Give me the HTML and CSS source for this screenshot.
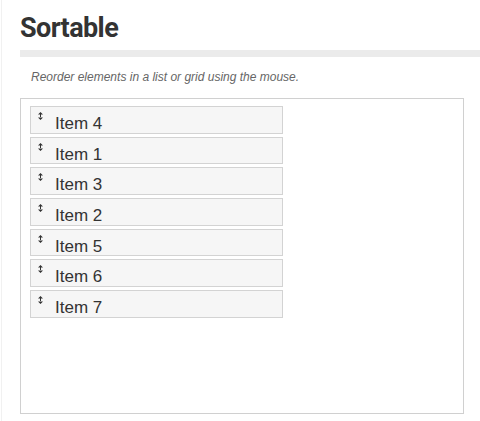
FILE: index.html
```html
<!DOCTYPE html>
<html lang="en">
<head>
  <meta charset="UTF-8">
  <title>Sortable</title>
  <link rel="stylesheet" href="styles.css">
</head>
<body>
  <div class="page">
    <div class="edge"></div>
    <div class="content">
      <h1>Sortable</h1>
      <div class="rule"></div>
      <p class="desc">Reorder elements in a list or grid using the mouse.</p>
      <div class="demo">
        <ul class="sortable">
          <li><svg class="handle" width="5" height="8" viewBox="0 0 5 8"><path d="M2.5 0 L5 2.5 H0 Z M2.5 8 L5 5.5 H0 Z M2 2 H3 V6 H2 Z" fill="#333"/></svg>Item 4</li>
          <li><svg class="handle" width="5" height="8" viewBox="0 0 5 8"><path d="M2.5 0 L5 2.5 H0 Z M2.5 8 L5 5.5 H0 Z M2 2 H3 V6 H2 Z" fill="#333"/></svg>Item 1</li>
          <li><svg class="handle" width="5" height="8" viewBox="0 0 5 8"><path d="M2.5 0 L5 2.5 H0 Z M2.5 8 L5 5.5 H0 Z M2 2 H3 V6 H2 Z" fill="#333"/></svg>Item 3</li>
          <li><svg class="handle" width="5" height="8" viewBox="0 0 5 8"><path d="M2.5 0 L5 2.5 H0 Z M2.5 8 L5 5.5 H0 Z M2 2 H3 V6 H2 Z" fill="#333"/></svg>Item 2</li>
          <li><svg class="handle" width="5" height="8" viewBox="0 0 5 8"><path d="M2.5 0 L5 2.5 H0 Z M2.5 8 L5 5.5 H0 Z M2 2 H3 V6 H2 Z" fill="#333"/></svg>Item 5</li>
          <li><svg class="handle" width="5" height="8" viewBox="0 0 5 8"><path d="M2.5 0 L5 2.5 H0 Z M2.5 8 L5 5.5 H0 Z M2 2 H3 V6 H2 Z" fill="#333"/></svg>Item 6</li>
          <li><svg class="handle" width="5" height="8" viewBox="0 0 5 8"><path d="M2.5 0 L5 2.5 H0 Z M2.5 8 L5 5.5 H0 Z M2 2 H3 V6 H2 Z" fill="#333"/></svg>Item 7</li>
        </ul>
      </div>
    </div>
  </div>
</body>
</html>
```

FILE: styles.css
```css
* { box-sizing: border-box; }
body {
  margin: 0;
  background: #fff;
  font-family: "Liberation Sans", Arial, sans-serif;
  color: #333;
}
.page {
  display: flex;
  height: 421px;
  overflow: hidden;
}
.edge {
  width: 2px;
  border-right: 1px solid #f1f1f1;
}
.content {
  flex: 1;
  padding-left: 18px;
}
h1 {
  margin: 0;
  padding-top: 12px;
  height: 50px;
  font-family: Roboto, sans-serif;
  font-weight: bold;
  font-size: 27px;
  letter-spacing: -0.6px;
  color: #333;
}
.rule {
  height: 7px;
  background: #ebebeb;
}
.desc {
  margin: 0;
  padding: 13px 0 0 11px;
  height: 41px;
  font-style: italic;
  font-size: 12px;
  color: #666;
}
.demo {
  width: 444px;
  height: 316px;
  border: 1px solid #d0d0d0;
  padding: 7px 9px;
}
.sortable {
  list-style: none;
  margin: 0;
  padding: 0;
  width: 253px;
}
.sortable li {
  display: flex;
  align-items: flex-start;
  height: 27.7px;
  margin-bottom: 3px;
  background: #f6f6f6;
  border: 1px solid #d3d3d3;
  padding: 5px 0 0 7px;
  font-size: 17px;
  line-height: 23px;
  color: #333;
}
.handle {
  margin: 0 12px 0 0;
  flex: none;
}
```
